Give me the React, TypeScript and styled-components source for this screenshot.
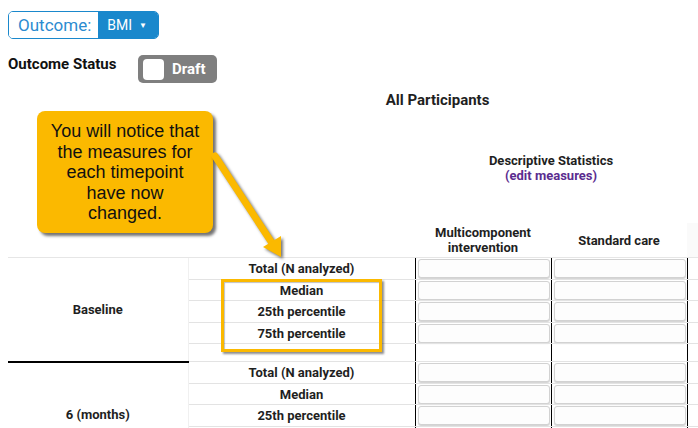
import React from "react";
import styled, { createGlobalStyle } from "styled-components";

const GlobalStyle = createGlobalStyle`
  html, body {
    margin: 0;
    padding: 0;
    background: #fff;
    overflow: hidden;
  }
  body {
    font-family: Roboto, "Liberation Sans", Arial, sans-serif;
    color: #1a1a1a;
  }
`;

const Page = styled.div`
  position: relative;
  width: 698px;
  height: 428px;
  padding: 11px 0 0 8px;
  box-sizing: border-box;
  overflow: hidden;
`;

const OutcomePicker = styled.div`
  display: inline-flex;
  height: 28px;
  border: 1px solid #1a88cc;
  border-radius: 5px;
  overflow: hidden;
  box-sizing: border-box;
`;

const PickerLabel = styled.span`
  display: flex;
  align-items: center;
  padding: 0 7px 0 9px;
  font-size: 17px;
  color: #2b8bd0;
  background: #fff;
`;

const PickerValue = styled.span`
  display: flex;
  align-items: center;
  gap: 7px;
  padding: 0 11px 0 9px;
  background: #1a88cc;
  color: #fff;
  font-size: 14px;
`;

const Caret = styled.span`
  font-size: 8px;
`;

const StatusRow = styled.div`
  display: flex;
  align-items: flex-start;
  gap: 20px;
  margin-top: 16px;
`;

const StatusLabel = styled.span`
  width: 110px;
  font-size: 15px;
  font-weight: 700;
  color: #111;
`;

const Toggle = styled.div`
  display: flex;
  align-items: center;
  gap: 8px;
  width: 79px;
  height: 28px;
  padding: 0 5px;
  box-sizing: border-box;
  border-radius: 5px;
  background: #7f7f7f;
  color: #fff;
  font-size: 15px;
  font-weight: 700;
`;

const ToggleBox = styled.span`
  width: 21px;
  height: 21px;
  border-radius: 4px;
  background: #fff;
`;

const Table = styled.table`
  margin-top: 5px;
  border-collapse: collapse;
  table-layout: fixed;
  width: 800px;
  font-size: 13px;
  font-weight: 700;
  color: #1f1f1f;
`;

const HeadCell = styled.th<{ $h: number; $shade?: boolean; $big?: boolean; $base?: boolean }>`
  height: ${(p) => p.$h}px;
  padding: 0;
  text-align: center;
  vertical-align: middle;
  font-weight: 700;
  font-size: ${(p) => (p.$big ? "15px" : "13px")};
  line-height: 15px;
  background: ${(p) => (p.$shade ? "#fafafa" : "transparent")};
  border-bottom: ${(p) => (p.$base ? "1px solid #e6e6e6" : "none")};
`;

const EditLink = styled.a`
  color: #5b2c8f;
  text-decoration: none;
`;

const TimeCell = styled.td<{ $last?: boolean }>`
  padding: 0;
  text-align: center;
  vertical-align: middle;
  border-right: 1px solid #f0f0f0;
  border-bottom: ${(p) => (p.$last ? "none" : "2px solid #000")};
`;

const MeasureCell = styled.td`
  padding: 0;
  text-align: center;
  vertical-align: middle;
  border-bottom: 1px solid #e3e3e3;
`;

const GroupCell = styled.td<{ $edge?: boolean }>`
  padding: 0 1px 0 2px;
  vertical-align: middle;
  border-left: 1px solid #000;
  border-right: ${(p) => (p.$edge ? "1px solid #000" : "none")};
  border-bottom: 1px solid #e3e3e3;
`;

const RestCell = styled.td`
  padding: 0;
  border-bottom: 1px solid #e3e3e3;
`;

const BodyRow = styled.tr<{ $h: number }>`
  height: ${(p) => p.$h}px;
`;

const ValueInput = styled.input`
  display: block;
  width: 100%;
  height: 19px;
  box-sizing: border-box;
  border: 1px solid #d2d2d2;
  border-radius: 3px;
  background: #fdfdfd;
  box-shadow: 0 1px 1px rgba(0, 0, 0, 0.18);
`;

const Callout = styled.div`
  position: absolute;
  left: 37px;
  top: 111px;
  width: 176px;
  height: 122px;
  box-sizing: border-box;
  padding-top: 10px;
  border-radius: 8px;
  background: #fbb900;
  box-shadow: 3px 3px 3px rgba(0, 0, 0, 0.55);
  font-family: "Liberation Sans", Arial, sans-serif;
  font-size: 18px;
  line-height: 20.5px;
  font-weight: 400;
  text-align: center;
  color: #111;
`;

const Pointer = styled.svg`
  position: absolute;
  left: 200px;
  top: 140px;
  overflow: visible;
  filter: drop-shadow(2px 2px 1.5px rgba(0, 0, 0, 0.55));
`;

const Highlight = styled.div`
  position: absolute;
  left: 221px;
  top: 279px;
  width: 161px;
  height: 73px;
  box-sizing: border-box;
  border: 3px solid #fbb900;
  box-shadow: 2px 2px 2px rgba(0, 0, 0, 0.45), inset 1px 1px 1px rgba(0, 0, 0, 0.25);
`;

type Row = { label: string; h: number; input: boolean };

const blockRows: Row[] = [
  { label: "Total (N analyzed)", h: 22, input: true },
  { label: "Median", h: 21, input: true },
  { label: "25th percentile", h: 22, input: true },
  { label: "75th percentile", h: 21, input: true },
  { label: "", h: 18, input: false },
];

const timepoints = ["Baseline", "6 (months)"];

export default function App() {
  return (
    <Page>
      <GlobalStyle />
      <OutcomePicker>
        <PickerLabel>Outcome:</PickerLabel>
        <PickerValue>
          BMI <Caret>▼</Caret>
        </PickerValue>
      </OutcomePicker>

      <StatusRow>
        <StatusLabel>Outcome Status</StatusLabel>
        <Toggle>
          <ToggleBox />
          Draft
        </Toggle>
      </StatusRow>

      <Table>
        <colgroup>
          <col style={{ width: 180 }} />
          <col style={{ width: 227 }} />
          <col style={{ width: 136 }} />
          <col style={{ width: 136 }} />
          <col style={{ width: 121 }} />
        </colgroup>
        <thead>
          <tr>
            <HeadCell $h={25} />
            <HeadCell $h={25} $big colSpan={3}>
              All Participants
            </HeadCell>
            <HeadCell $h={25} />
          </tr>
          <tr>
            <HeadCell $h={110} />
            <HeadCell $h={110} />
            <HeadCell $h={110} colSpan={2}>
              Descriptive Statistics
              <br />
              <EditLink href="#">(edit measures)</EditLink>
            </HeadCell>
            <HeadCell $h={110} />
          </tr>
          <tr>
            <HeadCell $h={34} $base />
            <HeadCell $h={34} $base />
            <HeadCell $h={34} $base>
              Multicomponent
              <br />
              intervention
            </HeadCell>
            <HeadCell $h={34} $base>
              Standard care
            </HeadCell>
            <HeadCell $h={34} $base $shade />
          </tr>
        </thead>
        <tbody>
          {timepoints.map((tp, ti) =>
            blockRows.map((r, ri) => (
              <BodyRow key={`${tp}-${ri}`} $h={r.h}>
                {ri === 0 && (
                  <TimeCell rowSpan={blockRows.length} $last={ti === timepoints.length - 1}>
                    {tp}
                  </TimeCell>
                )}
                <MeasureCell>{r.label}</MeasureCell>
                <GroupCell>{r.input && <ValueInput />}</GroupCell>
                <GroupCell $edge>{r.input && <ValueInput />}</GroupCell>
                <RestCell />
              </BodyRow>
            ))
          )}
        </tbody>
      </Table>

      <Callout>
        You will notice that
        <br />
        the measures for
        <br />
        each timepoint
        <br />
        have now
        <br />
        changed.
      </Callout>

      <Pointer width="90" height="120" viewBox="0 0 90 120">
        <line x1="15" y1="16" x2="72" y2="103" stroke="#fbb900" strokeWidth="7" strokeLinecap="round" />
        <polygon points="63,107 81,96 81,117" fill="#fbb900" />
      </Pointer>

      <Highlight />
    </Page>
  );
}
